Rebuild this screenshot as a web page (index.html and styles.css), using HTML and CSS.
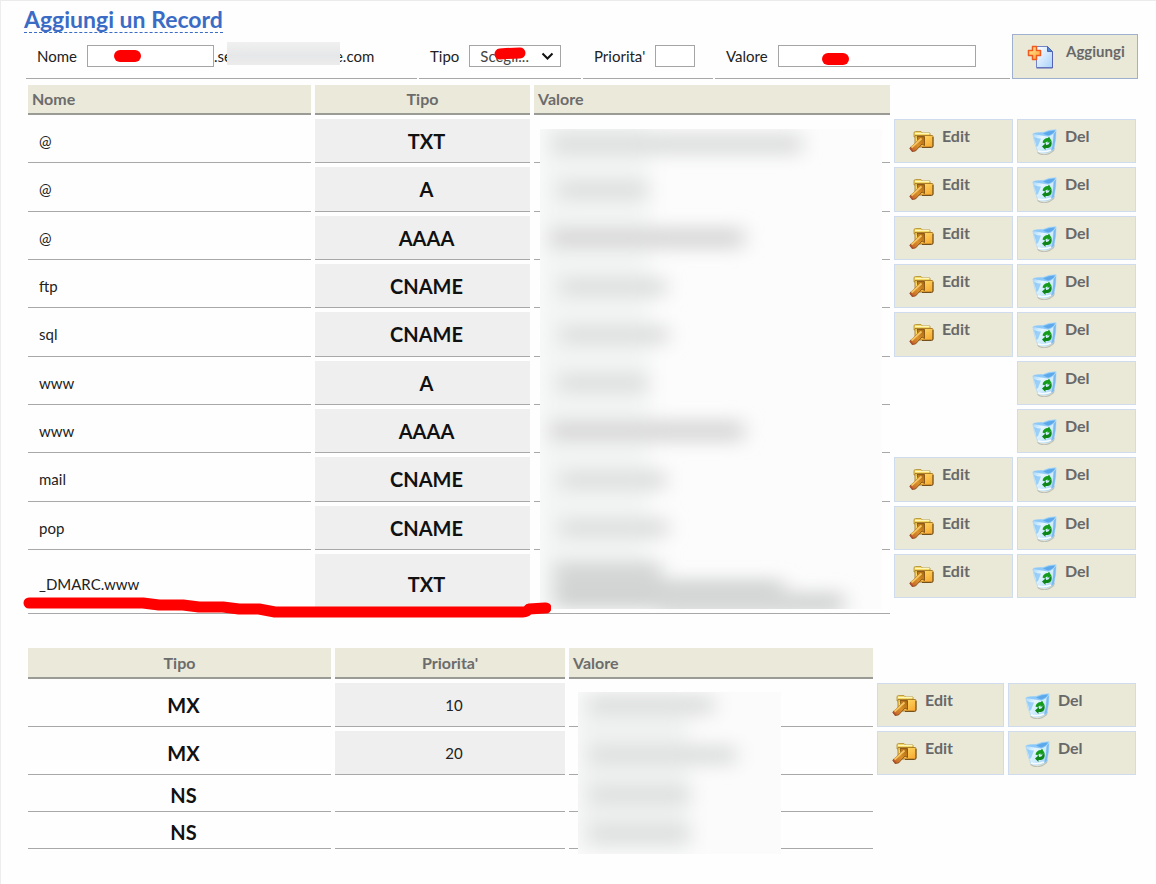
FILE: index.html
```html
<!DOCTYPE html>
<html lang="it">
<head>
<meta charset="utf-8">
<title>Aggiungi un Record</title>
<link rel="stylesheet" href="styles.css">
</head>
<body>
<svg class="sprites" aria-hidden="true">
  <defs>
    <linearGradient id="gold" x1="0" y1="0" x2="1" y2="1"><stop offset="0" stop-color="#ffe873"/><stop offset="1" stop-color="#f7a42c"/></linearGradient>
    <linearGradient id="handle" x1="1" y1="0" x2="0" y2="1"><stop offset="0" stop-color="#a8640c"/><stop offset=".5" stop-color="#d9922a"/><stop offset="1" stop-color="#c25a2c"/></linearGradient>
    <linearGradient id="glass" x1="0" y1="0" x2="1" y2="1"><stop offset="0" stop-color="#8fcbfb"/><stop offset=".35" stop-color="#e6f6ff"/><stop offset=".7" stop-color="#c4e6fc"/><stop offset="1" stop-color="#6db4ee"/></linearGradient>
    <linearGradient id="sheet" x1="0" y1="0" x2="1" y2="1"><stop offset="0" stop-color="#ffffff"/><stop offset="1" stop-color="#a9d2fb"/></linearGradient>
    <linearGradient id="plus" x1="0" y1="0" x2="1" y2="1"><stop offset="0" stop-color="#fff0a0"/><stop offset="1" stop-color="#ff9a2c"/></linearGradient>
    <filter id="soft" x="-20%" y="-100%" width="140%" height="300%"><feGaussianBlur stdDeviation="10 8"/></filter>
  </defs>
  <symbol id="i-edit" viewBox="0 0 25 26">
    <path d="M5 4q0-1.500 1.500-1.500H12L13.500 4H21v4H5z" fill="#f3d968" stroke="#b08c2c" stroke-width=".8"/>
    <path d="M6 4.500h14.500" stroke="#fff6b8" fill="none"/>
    <path d="M6 6.500h17q1 0 1 1v9q0 1.500-1.500 1.500H6z" fill="url(#gold)" stroke="#9c6a1a" stroke-width=".8"/>
    <path d="M24 8v9q0 1.500-1.500 1.500H13" fill="none" stroke="#76501c"/>
    <path d="M8 7.500h7.500v9l-2.500-1.500-6.500 7-3.500.5L.8 19 9 11.500z" fill="url(#handle)" stroke="#7a4810" stroke-width=".8"/>
    <path d="M2.500 18.500 12.500 9.500" stroke="#f6c562" stroke-width="1.800"/>
    <path d="M1.200 19.200l2.800 3" stroke="#b14e32" stroke-width="1.500"/>
  </symbol>
  <symbol id="i-del" viewBox="0 0 25 26">
    <path d="M5 22.500q7 5 14 .5l4-5-1 4q-8 7-16 2.500z" fill="#8f9690" opacity=".5"/>
    <path d="M.8 5Q3 3 11 3.500 17 .5 24.200 .8q0 9-2.400 19.700-7 5.500-16 2.300Q2 14 .8 5z" fill="url(#glass)" stroke="#a8d2ee" stroke-width=".6"/>
    <path d="M1 5Q3 3 11 3.500 17 .5 24 .8 22 6 16 7.500 8 6 1 5z" fill="#8cc8f8"/>
    <path d="M11 4.500Q17 1.500 23 1.500 21 5.500 16 6.500z" fill="#5da8ea"/>
    <path d="M2 8q3 1.500 7 1.500L6 17l-1.500 1z" fill="#6ab8f4" opacity=".6"/>
    <path d="M24 2q0 9-2.300 18l-2.200 1.500Q21.500 13 21.500 5z" fill="#7abaf0"/>
    <path d="M6 22q6 2 13-1" stroke="#f4fbff" stroke-width="1.500" fill="none"/>
    <path d="M10.500 13.500q1-4.500 5.500-4.500l1-1.500 2.500 4.500-4 2 .2-1.500q-2 0-2.700 2z" fill="#159c1c"/>
    <path d="M19.500 12q1 6-3.500 7h-2.500v2L10 17.500l4-3.500v2q3.500 0 3.500-3z" fill="#0d8617"/>
  </symbol>
  <symbol id="i-add" viewBox="0 0 27 26">
    <path d="M9.500 2.500h11l5 5v16h-16z" fill="url(#sheet)" stroke="#7383c8"/>
    <path d="M20.500 2.500v5h5z" fill="#4f86dc" stroke="#5064ac"/>
    <path d="M25.500 8v16h-16" fill="none" stroke="#5663b5"/>
    <path d="M5.500 2.500h4v4h4v5h-4v4h-4v-4h-4v-5h4z" fill="url(#plus)" stroke="#ef5a20" stroke-width="1.500" stroke-linejoin="round"/>
  </symbol>
</svg>

<main class="page">
  <h1 class="title"><span class="title-text">Aggiungi un Record</span></h1>

  <form class="add-form">
    <div class="field">
      <label for="nome">Nome</label>
      <span class="marked nome-box"><input id="nome" type="text"><svg class="mark mark-nome" viewBox="0 0 27 12" aria-hidden="true"><rect width="27" height="12" rx="6"/></svg></span>
      <span class="domain">.se<span class="domain-mask"></span>e.com</span>
    </div>
    <div class="field">
      <label for="tipo">Tipo</label>
      <span class="marked tipo-box"><select id="tipo"><option>Scegli...</option></select><svg class="chevron" viewBox="0 0 13 8" aria-hidden="true"><path d="M1.500 1.500l5 5 5-5"/></svg><svg class="mark mark-tipo" viewBox="0 0 32 13" aria-hidden="true"><path d="M6 7 12 6.500 26 6"/></svg></span>
    </div>
    <div class="field">
      <label for="priorita">Priorita'</label>
      <input id="priorita" class="short" type="text">
    </div>
    <div class="field">
      <label for="valore">Valore</label>
      <span class="marked valore-box"><input id="valore" type="text"><svg class="mark mark-valore" viewBox="0 0 27 12" aria-hidden="true"><rect width="27" height="12" rx="6"/></svg></span>
    </div>
    <button class="btn btn-add" type="button"><svg class="icon-add" aria-hidden="true"><use href="#i-add"/></svg>Aggiungi</button>
  </form>

  <section class="sheet">
    <table class="records hosts">
      <colgroup><col class="h-name"><col class="h-type"><col class="h-value"><col class="h-act"><col class="h-act"></colgroup>
      <thead><tr><th class="left">Nome</th><th>Tipo</th><th class="left">Valore</th><td></td><td></td></tr></thead>
      <tbody>
        <tr><td class="name">@</td><td class="type shade">TXT</td><td class="value"></td><td><button class="btn" type="button"><svg class="icon" aria-hidden="true"><use href="#i-edit"/></svg>Edit</button></td><td><button class="btn" type="button"><svg class="icon" aria-hidden="true"><use href="#i-del"/></svg>Del</button></td></tr>
        <tr><td class="name">@</td><td class="type shade">A</td><td class="value"></td><td><button class="btn" type="button"><svg class="icon" aria-hidden="true"><use href="#i-edit"/></svg>Edit</button></td><td><button class="btn" type="button"><svg class="icon" aria-hidden="true"><use href="#i-del"/></svg>Del</button></td></tr>
        <tr><td class="name">@</td><td class="type shade">AAAA</td><td class="value"></td><td><button class="btn" type="button"><svg class="icon" aria-hidden="true"><use href="#i-edit"/></svg>Edit</button></td><td><button class="btn" type="button"><svg class="icon" aria-hidden="true"><use href="#i-del"/></svg>Del</button></td></tr>
        <tr><td class="name">ftp</td><td class="type shade">CNAME</td><td class="value"></td><td><button class="btn" type="button"><svg class="icon" aria-hidden="true"><use href="#i-edit"/></svg>Edit</button></td><td><button class="btn" type="button"><svg class="icon" aria-hidden="true"><use href="#i-del"/></svg>Del</button></td></tr>
        <tr><td class="name">sql</td><td class="type shade">CNAME</td><td class="value"></td><td><button class="btn" type="button"><svg class="icon" aria-hidden="true"><use href="#i-edit"/></svg>Edit</button></td><td><button class="btn" type="button"><svg class="icon" aria-hidden="true"><use href="#i-del"/></svg>Del</button></td></tr>
        <tr><td class="name">www</td><td class="type shade">A</td><td class="value"></td><td></td><td><button class="btn" type="button"><svg class="icon" aria-hidden="true"><use href="#i-del"/></svg>Del</button></td></tr>
        <tr><td class="name">www</td><td class="type shade">AAAA</td><td class="value"></td><td></td><td><button class="btn" type="button"><svg class="icon" aria-hidden="true"><use href="#i-del"/></svg>Del</button></td></tr>
        <tr><td class="name">mail</td><td class="type shade">CNAME</td><td class="value"></td><td><button class="btn" type="button"><svg class="icon" aria-hidden="true"><use href="#i-edit"/></svg>Edit</button></td><td><button class="btn" type="button"><svg class="icon" aria-hidden="true"><use href="#i-del"/></svg>Del</button></td></tr>
        <tr><td class="name">pop</td><td class="type shade">CNAME</td><td class="value"></td><td><button class="btn" type="button"><svg class="icon" aria-hidden="true"><use href="#i-edit"/></svg>Edit</button></td><td><button class="btn" type="button"><svg class="icon" aria-hidden="true"><use href="#i-del"/></svg>Del</button></td></tr>
        <tr class="tall"><td class="name">_DMARC.www</td><td class="type shade">TXT</td><td class="value"></td><td><button class="btn" type="button"><svg class="icon" aria-hidden="true"><use href="#i-edit"/></svg>Edit</button></td><td><button class="btn" type="button"><svg class="icon" aria-hidden="true"><use href="#i-del"/></svg>Del</button></td></tr>
      </tbody>
    </table>
    <svg class="mask mask-hosts" viewBox="0 0 342 480" preserveAspectRatio="none" aria-hidden="true">
      <rect width="342" height="480" fill="#fcfcfc"/>
      <g filter="url(#soft)" fill="#e0e1e1">
        <rect x="0" y="-10" width="110" height="490" fill="#f3f4f4"/>
        <rect x="12" y="3" width="250" height="24"/>
        <rect x="18" y="50" width="90" height="22"/>
        <rect x="10" y="97" width="194" height="24" fill="#dcdcdc"/>
        <rect x="20" y="147" width="106" height="22"/>
        <rect x="20" y="195" width="108" height="22"/>
        <rect x="18" y="243" width="90" height="22"/>
        <rect x="10" y="290" width="194" height="24" fill="#dcdcdc"/>
        <rect x="20" y="340" width="106" height="22"/>
        <rect x="20" y="388" width="108" height="22"/>
        <rect x="14" y="432" width="108" height="48" fill="#d6d8d7"/>
        <rect x="14" y="450" width="230" height="30" fill="#d2d4d3"/>
        <rect x="120" y="462" width="184" height="24" fill="#d6d8d7"/>
      </g>
    </svg>
    <svg class="mark underline" viewBox="0 0 528 22" preserveAspectRatio="none" aria-hidden="true"><path d="M6 6h114l16 2h24l16 2h24l16 2h20l16 3h248q4 0 6-3l16-1h1"/></svg>
  </section>

  <section class="sheet servers-sheet">
    <table class="records servers">
      <colgroup><col class="s-type"><col class="s-prio"><col class="s-value"><col class="s-edit"><col class="s-del"></colgroup>
      <thead><tr><th>Tipo</th><th>Priorita'</th><th class="left">Valore</th><td></td><td></td></tr></thead>
      <tbody>
        <tr><td class="type">MX</td><td class="prio shade">10</td><td class="value"></td><td><button class="btn" type="button"><svg class="icon" aria-hidden="true"><use href="#i-edit"/></svg>Edit</button></td><td><button class="btn btn-wide" type="button"><svg class="icon" aria-hidden="true"><use href="#i-del"/></svg>Del</button></td></tr>
        <tr><td class="type">MX</td><td class="prio shade">20</td><td class="value"></td><td><button class="btn" type="button"><svg class="icon" aria-hidden="true"><use href="#i-edit"/></svg>Edit</button></td><td><button class="btn btn-wide" type="button"><svg class="icon" aria-hidden="true"><use href="#i-del"/></svg>Del</button></td></tr>
        <tr class="compact"><td class="type">NS</td><td class="prio"></td><td class="value"></td><td></td><td></td></tr>
        <tr class="compact"><td class="type">NS</td><td class="prio"></td><td class="value"></td><td></td><td></td></tr>
      </tbody>
    </table>
    <svg class="mask mask-servers" viewBox="0 0 203 162" preserveAspectRatio="none" aria-hidden="true">
      <rect width="203" height="162" fill="#fbfbfb"/>
      <g filter="url(#soft)" fill="#e0e1e1">
        <rect x="0" y="0" width="110" height="160" fill="#f0f1f1"/>
        <rect x="12" y="2" width="124" height="22"/>
        <rect x="12" y="52" width="146" height="22"/>
        <rect x="12" y="92" width="100" height="22"/>
        <rect x="12" y="130" width="100" height="22"/>
      </g>
    </svg>
  </section>
</main>
</body>
</html>
```
FILE: styles.css
```css
* { box-sizing: border-box; }

body {
  margin: 0;
  min-height: 100vh;
  border-top: 1px solid #ebebeb;
  border-left: 1px solid #ededed;
  background: #fefefe;
  color: #222;
  font: 15px/20px Lato, "Open Sans", sans-serif;
}

button, input, select { font: inherit; color: inherit; }

.sprites { position: absolute; width: 0; height: 0; }

.page { padding: 6px 16px 24px 23px; }

.title { margin: 0 0 1px; font-size: 23px; line-height: 25px; color: #3a6cc6; }
.title-text { display: inline-block; border-bottom: 1px dashed #3a6cc6; }

/* entry form */
.add-form {
  display: grid;
  grid-template-columns: 391fr 162fr 130fr 295fr 126fr;
  gap: 2px;
  padding: 0 2px;
}

.field {
  display: flex;
  align-items: center;
  gap: 10px;
  height: 45px;
  padding-left: 11px;
  border-bottom: 1px solid #a8a8a8;
  white-space: nowrap;
}

.field input, .field select {
  width: 100%;
  height: 22px;
  padding: 0 4px;
  border: 1px solid #a5a5a5;
  border-radius: 0;
  background: #fff;
}
.field .short { width: 40px; }
.field select { appearance: none; padding-left: 10px; color: #444; }

.marked { position: relative; display: flex; }
.nome-box { width: 127px; }
.tipo-box { width: 92px; }
.valore-box { width: 198px; }

.chevron {
  position: absolute;
  right: 7px;
  top: 7px;
  width: 13px;
  height: 8px;
  fill: none;
  stroke: #111;
  stroke-width: 2;
}

.mark { position: absolute; fill: #f00; }
.mark path { fill: none; stroke: #f00; stroke-width: 11; stroke-linecap: round; stroke-linejoin: round; }
.mark-nome { left: 27px; top: 5px; width: 27px; height: 12px; }
.mark-valore { left: 44px; top: 8px; width: 27px; height: 12px; }
.mark-tipo { left: 25px; top: 2px; width: 32px; height: 13px; }

.domain { display: flex; align-items: center; margin-left: -10px; }
.domain-mask {
  position: relative;
  width: 113px;
  height: 23px;
  margin: -6px -5px 0;
  background: linear-gradient(#f0f0f0, #e6e7e8 60%, #ececec);
}

/* buttons */
.btn {
  display: flex;
  align-items: flex-start;
  gap: 8px;
  width: 100%;
  height: 44px;
  padding: 6px 8px 0 14px;
  border: 1px solid #cfdcee;
  background: #eae9d8;
  color: #686868;
  font-size: 16px;
  font-weight: bold;
  text-align: left;
}
.btn-wide { padding-left: 16px; }
.btn-add { gap: 12px; height: 45px; border-color: #9fb0cf; font-size: 15px; }
.icon { flex: none; width: 25px; height: 26px; margin-top: 3px; }
.icon-add { flex: none; width: 27px; height: 26px; margin-top: 3px; }

/* record tables */
.sheet { position: relative; margin-top: 2px; }
.servers-sheet { margin-top: 26px; }

.records { width: 100%; table-layout: fixed; border-spacing: 4px; }
.records td, .records th { padding: 0; }
.records td { height: 44px; vertical-align: top; }
.records thead td { height: 30px; }

.records th {
  height: 30px;
  padding: 0 4px;
  border-bottom: 2px solid #9b9b96;
  background: #eae9da;
  color: #6c6c6c;
  font-size: 16px;
  text-align: center;
}
.records th.left { text-align: left; }
.servers th { height: 31px; }

.h-name { width: 25.92%; }
.h-type { width: 19.69%; }
.h-value { width: 32.6%; }
.h-act { width: 10.9%; }
.s-type { width: 27.75%; }
.s-prio { width: 21.06%; }
.s-value { width: 27.84%; }
.s-edit { width: 11.63%; }
.s-del { width: 11.72%; }

.records .name, .records .type, .records .value, .records .prio {
  border-bottom: 1px solid #a8a8a8;
  vertical-align: middle;
}
.records .name { padding-left: 11px; }
.records .type { padding-left: 8px; color: #111; font-size: 20px; font-weight: bold; text-align: center; }
.records .prio { padding-left: 8px; text-align: center; }
.records .shade { background: #efefef; }

.hosts tbody tr:nth-child(3n+2) td, .hosts tbody tr:nth-child(3n+2) .btn { height: 45px; }
.hosts .tall td { height: 60px; }
.servers .compact td { height: 33px; }

/* blurred areas and pen stroke over the tables */
.mask { position: absolute; overflow: hidden; }
.mask-hosts { left: 46.24%; top: 48px; width: 30.65%; height: 480px; }
.mask-servers { left: 49.64%; top: 48px; width: 18.19%; height: 162px; }
.underline { left: -1px; bottom: -1px; width: 47.31%; height: 22px; }
```
